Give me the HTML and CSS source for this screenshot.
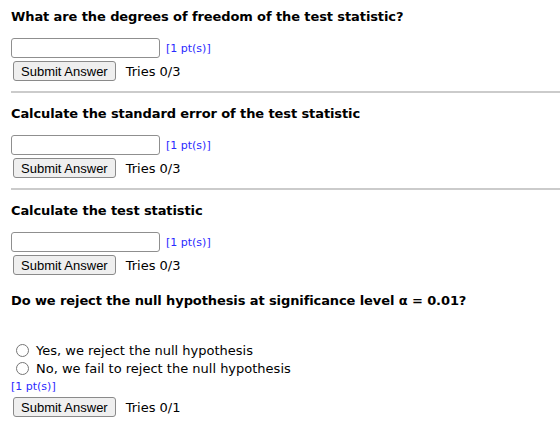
FILE: index.html
```html
<!DOCTYPE html>
<html lang="en">
<head>
  <meta charset="UTF-8" />
  <title>Hypothesis Test</title>
  <link rel="stylesheet" href="styles.css">
</head>
<body>
  <div class="question first">
    <h2 class="prompt">What are the degrees of freedom of the test statistic?</h2>
    <div class="answer-row">
      <input type="text" class="answer" />
      <span class="points">[1 pt(s)]</span>
    </div>
    <div class="submit-row">
      <button type="button">Submit Answer</button>
      <span class="tries">Tries 0/3</span>
    </div>
  </div>
  <hr />

  <div class="question">
    <h2 class="prompt">Calculate the standard error of the test statistic</h2>
    <div class="answer-row">
      <input type="text" class="answer" />
      <span class="points">[1 pt(s)]</span>
    </div>
    <div class="submit-row">
      <button type="button">Submit Answer</button>
      <span class="tries">Tries 0/3</span>
    </div>
  </div>
  <hr />

  <div class="question">
    <h2 class="prompt">Calculate the test statistic</h2>
    <div class="answer-row">
      <input type="text" class="answer" />
      <span class="points">[1 pt(s)]</span>
    </div>
    <div class="submit-row">
      <button type="button">Submit Answer</button>
      <span class="tries">Tries 0/3</span>
    </div>
  </div>

  <div class="question last">
    <h2 class="prompt">Do we reject the null hypothesis at significance level α = 0.01?</h2>
    <div class="choices">
      <label><input type="radio" name="reject" />Yes, we reject the null hypothesis</label>
      <label><input type="radio" name="reject" />No, we fail to reject the null hypothesis</label>
    </div>
    <div class="points block">[1 pt(s)]</div>
    <div class="submit-row">
      <button type="button">Submit Answer</button>
      <span class="tries">Tries 0/1</span>
    </div>
  </div>
</body>
</html>
```

FILE: styles.css
```css
body {
  margin: 0;
  padding: 0 0 0 11px;
  font-family: "DejaVu Sans", Verdana, sans-serif;
  font-size: 13px;
  color: #000;
  background: #fff;
}
.question {
  padding-top: 13px;
}
.question.first {
  padding-top: 9px;
}
.prompt {
  margin: 0;
  font-size: 13px;
  line-height: 16px;
  font-weight: bold;
  letter-spacing: -0.1px;
}
.answer-row {
  display: flex;
  align-items: center;
  gap: 6px;
  height: 20px;
  margin-top: 13px;
}
.answer {
  width: 149px;
  height: 20px;
  box-sizing: border-box;
  margin: 0;
  border: 1px solid #8f8f8f;
  border-radius: 3px;
  padding: 1px 3px;
  background: #fff;
}
.points {
  color: #2a2aff;
  font-size: 11px;
}
.points.block {
  line-height: 13px;
  margin-top: 3px;
}
.submit-row {
  display: flex;
  align-items: center;
  gap: 10px;
  height: 20px;
  margin-top: 3px;
  padding-left: 2px;
}
button {
  height: 20px;
  margin: 0;
  padding: 0 7px;
  font-family: "Liberation Sans", Arial, sans-serif;
  font-size: 13px;
  color: #000;
  background: #efefef;
  border: 1px solid #8a8a8a;
  border-radius: 3px;
}
.tries {
  font-size: 13px;
}
hr {
  height: 0;
  margin: 10px 0 0;
  border: none;
  border-top: 2px solid #cbcbcb;
}
.last {
  padding-top: 18px;
}
.choices {
  margin-top: 32px;
  display: flex;
  flex-direction: column;
}
.choices label {
  display: flex;
  align-items: center;
  height: 18px;
}
.choices input {
  margin: 0 7px 0 5px;
  width: 13px;
  height: 13px;
}
.last .submit-row {
  margin-top: 4px;
}
```
